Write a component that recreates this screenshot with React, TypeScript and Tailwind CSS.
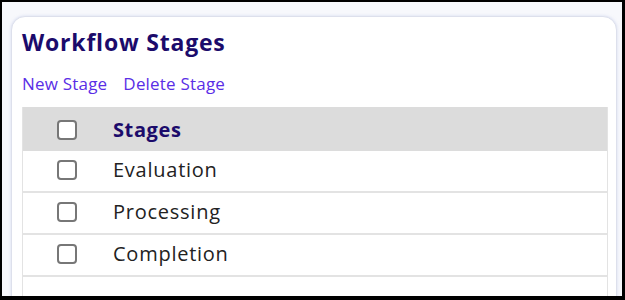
import React from "react";

const rows = ["Evaluation", "Processing", "Completion"];

function Box() {
  return (
    <div className="w-[20px] h-[20px] rounded-[4px] border-2 border-[#777777] bg-white shrink-0" />
  );
}

export default function App() {
  return (
    <div
      className="w-[625px] h-[300px] overflow-hidden bg-[#f7f8fc] border-black border-l-2 border-t-2 border-r-[3px] border-b-[4px]"
      style={{ fontFamily: '"Open Sans", "Noto Sans", sans-serif' }}
    >
      <div className="ml-[9px] mt-[14px] w-[606px] h-[320px] rounded-t-[14px] border border-[#dde0ec] bg-white shadow-[0_0_3px_rgba(180,190,230,0.5)] pl-[10px] pr-[8px] pt-[10px]">
        <h1 className="text-[23px] leading-[31px] font-bold text-[#1b0b6b] tracking-[0.8px]">
          Workflow Stages
        </h1>
        <div className="mt-[14px] flex gap-[16px] text-[17px] leading-[24px] text-[#5a2ee6] tracking-[0.2px]">
          <span>New Stage</span>
          <span>Delete Stage</span>
        </div>
        <div className="mt-[11px] border-l border-r border-[#e3e3e3]">
          <div className="h-[44px] bg-[#dcdcdc] flex items-center pt-[2px]">
            <div className="w-[86px] flex justify-center pl-px">
              <Box />
            </div>
            <span className="ml-[4px] text-[20px] font-bold text-[#1b0b6b] tracking-[0.6px]">Stages</span>
          </div>
          {rows.map((r) => (
            <div key={r} className="h-[42px] border-b-2 border-[#e3e3e3] flex items-center pb-[3px]">
              <div className="w-[86px] flex justify-center pl-px">
                <Box />
              </div>
              <span className="ml-[4px] text-[20px] text-[#222222] tracking-[0.75px]">{r}</span>
            </div>
          ))}
          <div className="h-[60px]" />
        </div>
      </div>
    </div>
  );
}
